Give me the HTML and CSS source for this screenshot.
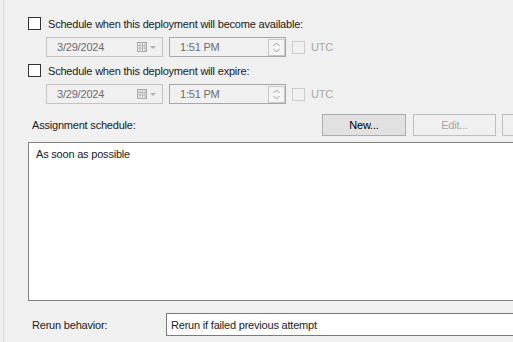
FILE: index.html
```html
<!DOCTYPE html>
<html lang="en">
<head>
<meta charset="UTF-8">
<title>Deployment Scheduling</title>
<link rel="stylesheet" href="styles.css">
</head>
<body>
<div class="page">
    <!-- Available time -->
    <div class="check-row first">
        <span class="checkbox"></span>
        <span>Schedule when this deployment will become available:</span>
    </div>
    <div class="date-row">
        <div class="date-box">
            <span>3/29/2024</span>
            <span class="cal">
                <svg width="20" height="10" viewBox="0 0 20 10">
                    <rect x="0.5" y="0.5" width="9" height="9" fill="none" stroke="#a8a8a8"/>
                    <path d="M0 3.5h10M0 6h10M3 1v9M5.5 1v9M8 1v9" stroke="#b8b8b8" stroke-width="1"/>
                    <path d="M13 4h6l-3 3z" fill="#b0b0b0"/>
                </svg>
            </span>
        </div>
        <div class="time-box">
            <span>1:51 PM</span>
            <span class="spin">
                <svg width="17" height="17" viewBox="0 0 17 17">
                    <rect x="0.5" y="0.5" width="16" height="16" fill="#f4f4f4" stroke="#c8c8c8"/>
                    <path d="M5.5 7l3-3 3 3M5.5 10l3 3 3-3" fill="none" stroke="#9a9a9a" stroke-width="1"/>
                </svg>
            </span>
        </div>
        <span class="checkbox disabled"></span>
        <span class="utc">UTC</span>
    </div>

    <!-- Expiry time -->
    <div class="check-row">
        <span class="checkbox"></span>
        <span>Schedule when this deployment will expire:</span>
    </div>
    <div class="date-row">
        <div class="date-box">
            <span>3/29/2024</span>
            <span class="cal">
                <svg width="20" height="10" viewBox="0 0 20 10">
                    <rect x="0.5" y="0.5" width="9" height="9" fill="none" stroke="#a8a8a8"/>
                    <path d="M0 3.5h10M0 6h10M3 1v9M5.5 1v9M8 1v9" stroke="#b8b8b8" stroke-width="1"/>
                    <path d="M13 4h6l-3 3z" fill="#b0b0b0"/>
                </svg>
            </span>
        </div>
        <div class="time-box">
            <span>1:51 PM</span>
            <span class="spin">
                <svg width="17" height="17" viewBox="0 0 17 17">
                    <rect x="0.5" y="0.5" width="16" height="16" fill="#f4f4f4" stroke="#c8c8c8"/>
                    <path d="M5.5 7l3-3 3 3M5.5 10l3 3 3-3" fill="none" stroke="#9a9a9a" stroke-width="1"/>
                </svg>
            </span>
        </div>
        <span class="checkbox disabled"></span>
        <span class="utc">UTC</span>
    </div>

    <!-- Assignment schedule -->
    <div class="assign-row">
        <span class="assign-label">Assignment schedule:</span>
        <button class="btn">New...</button>
        <button class="btn" disabled>Edit...</button>
        <button class="btn" disabled></button>
    </div>
    <div class="list-box">As soon as possible</div>

    <div class="rerun-row">
        <span class="rerun-label">Rerun behavior:</span>
        <div class="select-box">Rerun if failed previous attempt</div>
    </div>
</div>
</body>
</html>
```

FILE: styles.css
```css
body {
    margin: 0;
    background-color: #f0f0f0;
    font-family: "Liberation Sans", Arial, sans-serif;
    font-size: 11px;
    letter-spacing: -0.2px;
    color: #1a1a1a;
    overflow: hidden;
}
.page {
    margin-left: 3px;
    border-left: 1px solid #dadada;
    height: 342px;
    padding-left: 24px;
}
.check-row {
    display: flex;
    align-items: center;
    gap: 7px;
    height: 13px;
    margin-top: 7px;
}
.check-row.first {
    padding-top: 17px;
    margin-top: 0;
}
.checkbox {
    width: 11px;
    height: 11px;
    border: 1px solid #333;
    background: #fff;
    flex: none;
}
.checkbox.disabled {
    border-color: #cccccc;
    background: #f0f0f0;
}
.date-row {
    display: flex;
    align-items: center;
    margin-top: 7px;
    margin-left: 18px;
    height: 20px;
    color: #6d6d6d;
}
.date-box, .time-box {
    box-sizing: border-box;
    height: 20px;
    width: 117px;
    border: 1px solid #c3c3c3;
    background: #f0f0f0;
    display: flex;
    align-items: center;
    justify-content: space-between;
    padding-left: 10px;
    margin-right: 6px;
    flex: none;
}
.time-box {
    border-color: #a6a6a6;
    padding-right: 0;
}
.cal {
    display: flex;
    margin-right: 5px;
}
.spin {
    display: flex;
}
.utc {
    margin-left: 6px;
    color: #a6a6a6;
}
.assign-row {
    display: flex;
    align-items: center;
    margin-top: 10px;
    height: 22px;
}
.assign-label {
    box-sizing: border-box;
    width: 294px;
    padding-left: 4px;
    flex: none;
}
.btn {
    font: inherit;
    letter-spacing: inherit;
    height: 22px;
    width: 84px;
    margin-right: 6px;
    border: 1px solid #adadad;
    background: #e1e1e1;
    color: #000;
    padding: 0;
    flex: none;
}
.btn:first-of-type {
    margin-right: 7px;
}
.btn:disabled {
    width: 83px;
    background: #f0f0f0;
    border-color: #bfbfbf;
    color: #a5a5a5;
}
.list-box {
    box-sizing: border-box;
    margin-top: 6px;
    height: 159px;
    width: 520px;
    background: #fff;
    border: 1px solid #828282;
    padding: 5px 7px;
}
.rerun-row {
    display: flex;
    align-items: center;
    margin-top: 12px;
    height: 23px;
}
.rerun-label {
    box-sizing: border-box;
    width: 138px;
    padding-left: 4px;
    flex: none;
}
.select-box {
    box-sizing: border-box;
    height: 23px;
    width: 400px;
    flex: none;
    background: #fff;
    border: 1px solid #7a7a7a;
    display: flex;
    align-items: center;
    padding-left: 4px;
}
```
